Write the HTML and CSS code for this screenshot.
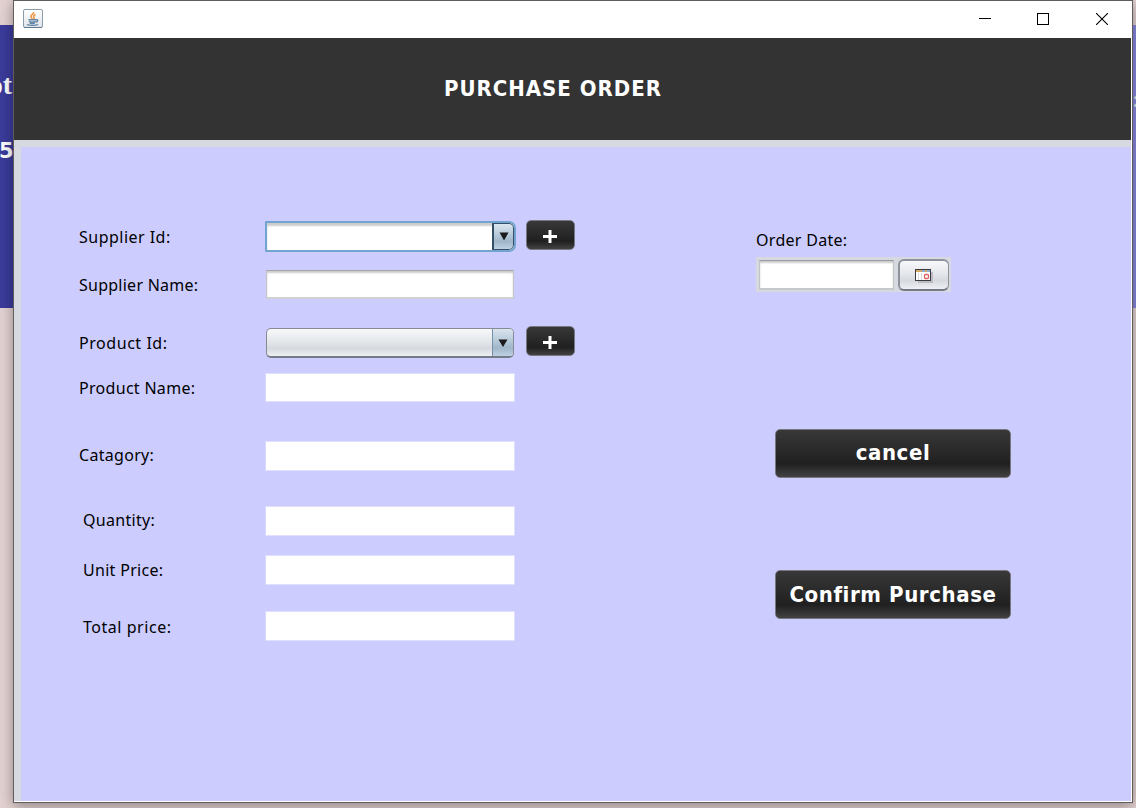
FILE: index.html
```html
<!DOCTYPE html>
<html lang="en">
<head>
<meta charset="utf-8">
<title>Purchase Order</title>
<link rel="stylesheet" href="styles.css">
</head>
<body>
<div class="desktop">
  <div class="behind behind-left"><span class="behind-title">ot</span><span class="behind-number">5</span></div>
  <div class="behind behind-right"><span class="behind-mark">:</span></div>
  <main class="window">
    <header class="titlebar">
      <svg class="java" width="20" height="20" viewBox="0 0 20 20">
        <defs><linearGradient id="jg" x1="0" y1="0" x2="0" y2="1"><stop offset="0" stop-color="#fff"/><stop offset="1" stop-color="#dfe3e8"/></linearGradient></defs>
        <rect x=".5" y=".5" width="19" height="18" rx="1.500" fill="url(#jg)" stroke="#8a9bab"/>
        <path d="M1 18.500h18" stroke="#5e7b95"/>
        <path d="M10.500 3c.7 2-3 2.800-2.500 4.500.2 1 1.200 1.500 1 2.500M12.500 5.500c-1.800.8-2.500 1.700-1.500 2.700.5.6.2 1.300-.3 1.800" fill="none" stroke="#f0903c" stroke-width="1.500"/>
        <path d="M5.500 10.800h8M6 12.200c1.500 1.200 5 1.200 6.500 0M6.500 13.800c1.500.7 4 .7 5.500 0M13.300 10.800c2-.6 2 2-.6 2.400M4 15.500c2 1.200 9 1.200 11 0" fill="none" stroke="#6488a5" stroke-width="1.400"/>
      </svg>
      <div class="controls">
        <svg width="12" height="12"><path d="M0 5.500h12" stroke="#000"/></svg>
        <svg width="12" height="12"><rect x=".5" y=".5" width="11" height="11" fill="none" stroke="#000"/></svg>
        <svg width="12" height="12"><path d="M0 0l12 12M12 0L0 12" stroke="#000" stroke-width="1.100"/></svg>
      </div>
    </header>
    <div class="banner"><h1>PURCHASE ORDER</h1></div>
    <div class="frame">
      <section class="body">
        <div class="form">
          <div class="row r1"><label class="l1">Supplier Id:</label><div class="combo focus"><span class="arrow"><svg width="10" height="9"><path d="M.5.500h9L5 8.500z" fill="#1b1b1d"/></svg></span></div><button class="dark plus"><svg width="16" height="14"><path d="M1 7.500h14M8 1v13" stroke="#fff" stroke-width="3"/></svg></button></div>
          <div class="row r2"><label class="l2">Supplier Name:</label><div class="field sunk"></div></div>
          <div class="row r3"><label class="l3">Product Id:</label><div class="combo"><span class="arrow"><svg width="10" height="9"><path d="M.5.500h9L5 8z" fill="#1b1b1d"/></svg></span></div><button class="dark plus"><svg width="16" height="14"><path d="M1 7.500h14M8 1v13" stroke="#fff" stroke-width="3"/></svg></button></div>
          <div class="row r4"><label class="l4">Product Name:</label><div class="field"></div></div>
          <div class="row r5"><label class="l5">Catagory:</label><div class="field"></div></div>
          <div class="row r6"><label class="l6">Quantity:</label><div class="field"></div></div>
          <div class="row r7"><label class="l7">Unit Price:</label><div class="field"></div></div>
          <div class="row r8"><label class="l8">Total price:</label><div class="field"></div></div>
        </div>
        <div class="side">
          <label class="l9">Order Date:</label>
          <div class="date"><div class="date-input"></div><button class="date-button"><svg width="19" height="15"><path d="M3 3h15v11H3z" fill="#bcbdc2"/><rect x=".5" y=".5" width="15" height="11" fill="#fff" stroke="#3b3b3f"/><path d="M1 2h14" stroke="#8cacd8" stroke-width="2"/><path d="M1 2h6M10 2h2" stroke="#eda83c" stroke-width="1.500"/><path d="M3.500 4v7M6.500 4v7" stroke="#d7d7da"/><rect x="9.500" y="5.500" width="4" height="4" rx="1" fill="#fff" stroke="#e06060" stroke-width="1.300"/></svg></button></div>
          <button class="dark big cancel"><span>cancel</span></button>
          <button class="dark big confirm"><span>Confirm Purchase</span></button>
        </div>
      </section>
    </div>
  </main>
</div>
</body>
</html>
```
FILE: styles.css
```css
* { box-sizing: border-box; }
body { margin: 0; font-family: "Noto Sans", "DejaVu Sans", sans-serif; color: #000; }
.desktop { position: relative; width: 1136px; height: 808px; overflow: hidden; background: #e4d2d2; padding-left: 13px; }
.behind { position: absolute; top: 25px; height: 283px; color: #fff; }
.behind-left { left: 0; width: 14px; background: #3b3b9c; }
.behind-right { left: 1132px; width: 4px; background: #8888e0; }
.behind-title { position: absolute; right: 2px; top: 44px; font: bold 28px/32px "Liberation Serif", serif; color: #fff; }
.behind-number { position: absolute; left: -1px; top: 113px; font: bold 21px/26px "DejaVu Sans", sans-serif; }
.behind-mark { position: absolute; left: 1px; top: 65px; font: bold 20px/20px "Noto Sans", sans-serif; color: #d8e6e6; }
.window { position: relative; width: 1120px; height: 803px; border: 1px solid #625d5d; background: #fff; display: flex; flex-direction: column; padding: 0 1px 1px 0; box-shadow: 0 3px 13px rgba(0,0,0,.38); }
.titlebar { height: 37px; display: flex; justify-content: space-between; padding: 8px 23px 0 9px; }
.controls { display: flex; gap: 47px; padding-top: 4px; }
.controls svg { display: block; }
.controls svg:nth-child(2) { margin: 0 0 0 -1px; }
.banner { height: 102px; background: #333; display: flex; padding: 36px 0 0 430px; }
h1 { margin: 0; color: #fff; font: bold 22px/30px "DejaVu Sans Condensed", "DejaVu Sans", sans-serif; white-space: nowrap; letter-spacing: .98px; }
.frame { flex: 1; background: #d6d9df; padding: 7px 0 0 7px; }
.body { height: 100%; background: #ccf; display: flex; }
.form { width: 735px; padding: 73px 0 0 58px; }
.row { display: flex; height: 32px; }
label { display: block; font-size: 16px; line-height: 22px; white-space: nowrap; }
.row label { width: 187px; padding-top: 6px; }
.l1 { letter-spacing: .48px; }
.l2 { letter-spacing: .25px; }
.l4, .l5, .l6, .l7, .l9 { letter-spacing: .3px; }
.l3 { letter-spacing: .55px; }
.l8 { letter-spacing: .54px; }
.r2 { margin-top: 16px; }
.r3 { margin-top: 26px; }
.r4 { margin-top: 13px; }
.r5 { margin-top: 35px; }
.r6 { margin-top: 33px; }
.r7 { margin-top: 18px; }
.r8 { margin-top: 25px; }
.r6 label, .r7 label, .r8 label { padding-left: 4px; }
.field { width: 250px; height: 30px; margin: 3px 0 0 -1px; background: #fff; border: 1px solid #e0e0fc; border-left-color: #d8d8fe; }
.r4 .field { height: 29px; margin-top: 2px; }
.r7 .field { margin-top: 2px; }
.r8 .field { margin-top: 1px; }
.row .sunk { width: 248px; height: 29px; margin: 2px 0 0; border: 1px solid #c3c3c9; border-top-color: #a5a5aa; border-bottom: 2px solid #d0d0d3; box-shadow: inset 0 2px 2px #ccc; }
.combo { width: 248px; height: 30px; margin-top: 2px; border: 1px solid #878b93; border-bottom: 2px solid #747b87; border-radius: 5px; background: linear-gradient(#f8f8fa, #e4e7eb 45%, #d6d9df 72%, #eef0f4); display: flex; justify-content: flex-end; overflow: hidden; }
.arrow { width: 21px; border-left: 1px solid #7691aa; background: linear-gradient(#dae5ef, #b5c8d8 45%, #a1b6ca 70%, #bed1e3); display: flex; justify-content: center; padding-top: 10px; }
.arrow svg { display: block; }
.focus { width: 251px; height: 31px; margin: 1px -2px 0 -1px; border: 2px solid #73a4d1; border-radius: 1px 7px 7px 1px; background: #fff; box-shadow: inset 0 3px 2px #ccc; }
.focus .arrow { width: 22px; border: 1px solid #344f68; border-left-width: 2px; border-radius: 0 5px 5px 0; padding-top: 8px; }
.dark { border: 1px solid #77777f; border-radius: 5px; padding: 0; color: #fff; background: linear-gradient(#383838, #292929 45%, #202020 72%, #424242); display: flex; justify-content: center; align-items: center; font-family: inherit; }
.plus { width: 49px; height: 30px; margin: 0 0 0 12px; }
.plus svg { margin: 2px 2px 0 0; }
.side { flex: 1; padding: 82px 0 0 0; }
.date { width: 195px; height: 35px; margin-top: 6px; background: #d6d9df; display: flex; padding: 3px 2px 1px 3px; gap: 4px; }
.date-input { width: 136px; height: 30px; background: #fff; border: 1px solid #c3c4c8; border-top-color: #9b9ca0; border-bottom: 2px solid #c8c9cc; box-shadow: inset 0 2px 2px #ccc; }
.date-button { width: 51px; height: 32px; margin-top: -1px; padding: 2px 0 0 0; border: 2px solid #8d929b; border-right-width: 1px; border-radius: 6px; border-bottom-color: #737a85; background: linear-gradient(#f8f8fa, #e4e7eb 45%, #d6d9df 70%, #eef0f4); display: flex; align-items: center; justify-content: center; }
.big { width: 236px; height: 49px; margin-left: 19px; font: bold 22px/30px "DejaVu Sans Condensed", "DejaVu Sans", sans-serif; white-space: nowrap; letter-spacing: .6px; }
.big span { margin-top: -1px; }
.cancel { margin-top: 137px; }
.confirm { margin-top: 92px; }
.confirm span { margin-top: 1px; }
```
